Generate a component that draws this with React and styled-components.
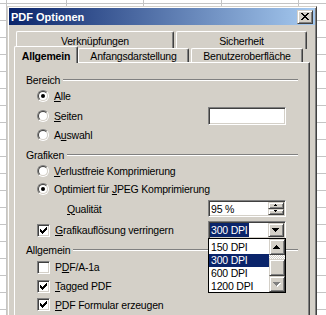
import styled, { createGlobalStyle, css } from "styled-components";

const GlobalStyle = createGlobalStyle`
  html, body {
    margin: 0;
    padding: 0;
  }
  body {
    font-family: "Liberation Sans", Arial, sans-serif;
    font-size: 10.5px;
    letter-spacing: -0.2px;
    color: #000;
  }
`;

const raised = css`
  box-sizing: border-box;
  background: #d4d0c8;
  border: 1px solid;
  border-color: #d4d0c8 #404040 #404040 #d4d0c8;
  box-shadow: inset 1px 1px #fff, inset -1px -1px #808080;
`;

const sunken = css`
  box-sizing: border-box;
  background: #fff;
  border: 1px solid;
  border-color: #808080 #fff #fff #808080;
  box-shadow: inset 1px 1px #404040, inset -1px -1px #d4d0c8;
`;

// spreadsheet behind the dialog
const Sheet = styled.div`
  width: 326px;
  height: 315px;
  overflow: hidden;
  box-sizing: border-box;
  padding: 6px 0 0 7px;
  background-color: #fff;
  background-image: linear-gradient(
      to right,
      transparent 6px,
      #c4c4c4 6px 7px,
      transparent 7px 66px,
      #c4c4c4 66px 67px,
      transparent 67px 143px,
      #c4c4c4 143px 144px,
      transparent 144px 221px,
      #c4c4c4 221px 222px,
      transparent 222px 298px,
      #c4c4c4 298px 299px,
      transparent 299px
    ),
    repeating-linear-gradient(
      to bottom,
      transparent 0 3px,
      #c4c4c4 3px 4px,
      transparent 4px 17px
    );
`;

const Dialog = styled.div`
  width: 310px;
  height: 330px;
  box-sizing: border-box;
  background: #d4d0c8;
  border: 1px solid;
  border-color: #d4d0c8 #404040 #404040 #d4d0c8;
  box-shadow: inset 1px 1px #fff, inset -1px -1px #808080;
  padding: 1px;
`;

const TitleBar = styled.div`
  height: 17px;
  display: flex;
  align-items: center;
  justify-content: space-between;
  padding: 0 2px;
  background: linear-gradient(to right, #0a246a, #a6caf0);
`;

const Title = styled.span`
  color: #fff;
  font-weight: bold;
  font-size: 11px;
  letter-spacing: 0;
`;

const CloseButton = styled.div`
  ${raised};
  width: 16px;
  height: 14px;
  display: flex;
  align-items: center;
  justify-content: center;
  padding-right: 1px;
`;

const Body = styled.div`
  padding: 6px 5px 0;
`;

const TabRow = styled.div`
  display: flex;
  gap: 2px;
  height: ${(p) => p.$h}px;
  padding-left: 2px;
  position: relative;
  z-index: ${(p) => (p.$front ? 2 : 1)};
`;

const Tab = styled.div`
  box-sizing: border-box;
  width: ${(p) => p.$w}px;
  height: ${(p) => p.$h}px;
  background: #d4d0c8;
  border-top: 1px solid #fff;
  border-left: 1px solid #fff;
  border-right: 1px solid #404040;
  box-shadow: inset -1px 0 #808080;
  border-radius: 2px 2px 0 0;
  text-align: center;
  padding-top: ${(p) => p.$pt}px;
  white-space: nowrap;

  ${(p) =>
    p.$active &&
    css`
      font-weight: bold;
      margin: -2px -2px 0;
      height: ${p.$h + 3}px;
      padding-top: ${p.$pt + 2}px;
    `}
`;

const Panel = styled.div`
  box-sizing: border-box;
  height: 300px;
  border: 1px solid;
  border-color: #fff #404040 #404040 #fff;
  box-shadow: inset -1px -1px #808080;
  padding: 10px 11px 0;
`;

const GroupHead = styled.div`
  display: flex;
  align-items: center;
  gap: 3px;
  height: 14px;
  margin-top: ${(p) => p.$mt || 0}px;

  &::after {
    content: "";
    flex: 1;
    border-top: 1px solid #808080;
    border-bottom: 1px solid #fff;
  }
`;

const OptionRow = styled.div`
  display: flex;
  align-items: center;
  height: ${(p) => p.$h}px;
  padding-left: ${(p) => p.$indent ?? 11}px;
  gap: 5px;
`;

const Radio = styled.span`
  position: relative;
  width: 12px;
  height: 12px;
  box-sizing: border-box;
  border-radius: 50%;
  border: 1px solid;
  border-color: #808080 #fff #fff #808080;
  flex: none;

  &::before {
    content: "";
    position: absolute;
    inset: 0;
    border-radius: 50%;
    border: 1px solid;
    border-color: #404040 #d4d0c8 #d4d0c8 #404040;
    background: #fff;
  }

  &::after {
    content: "";
    position: absolute;
    left: 3px;
    top: 3px;
    width: 4px;
    height: 4px;
    border-radius: 50%;
    background: #000;
    display: ${(p) => (p.$checked ? "block" : "none")};
  }
`;

const CheckBox = styled.span`
  ${sunken};
  width: 13px;
  height: 13px;
  flex: none;
  display: flex;
  align-items: center;
  justify-content: center;
`;

const Key = styled.span`
  text-decoration: underline;
`;

const Field = styled.div`
  ${sunken};
  position: relative;
  display: flex;
  align-items: stretch;
  width: 78px;
  height: ${(p) => p.$h}px;
  padding: 1px;
  margin-left: auto;
  margin-right: 12px;
`;

const FieldText = styled.span`
  flex: 1;
  display: flex;
  align-items: center;
  padding-left: 1px;
`;

const Highlight = styled.span`
  align-self: stretch;
  display: flex;
  align-items: center;
  background: #0a246a;
  color: #fff;
  padding: 0 1px;
  margin-right: auto;
`;

const SpinButtons = styled.div`
  display: flex;
  flex-direction: column;
  width: 16px;
`;

const SmallButton = styled.div`
  ${raised};
  flex: ${(p) => (p.$fill ? 1 : "none")};
  width: 16px;
  height: ${(p) => (p.$h ? `${p.$h}px` : "auto")};
  display: flex;
  align-items: center;
  justify-content: center;
`;

const DropList = styled.div`
  position: absolute;
  left: -1px;
  top: 100%;
  width: 78px;
  height: 55px;
  box-sizing: border-box;
  border: 1px solid #000;
  background: #fff;
  padding-top: 2px;
  overflow: hidden;
  z-index: 5;
`;

const ListItem = styled.div`
  width: 60px;
  height: 13px;
  line-height: 13px;
  padding-left: 2px;
  box-sizing: border-box;
  background: ${(p) => (p.$selected ? "#0a246a" : "transparent")};
  color: ${(p) => (p.$selected ? "#fff" : "#000")};
`;

const ScrollBar = styled.div`
  position: absolute;
  top: 0;
  right: 0;
  bottom: 0;
  width: 16px;
  display: flex;
  flex-direction: column;
`;

const Track = styled.div`
  height: 4px;
  background: repeating-conic-gradient(#d4d0c8 0 25%, #fff 0 50%) 0 0 / 2px 2px;
`;

const Arrow = ({ dir = "down", size = "big", disabled }) => {
  const d =
    size === "big"
      ? "M0 0h7v1h-7z M1 1h5v1h-5z M2 2h3v1h-3z M3 3h1v1h-1z"
      : "M0 0h3v1h-3z M1 1h1v1h-1z";
  const w = size === "big" ? 7 : 3;
  const h = size === "big" ? 4 : 2;
  const flip = dir === "up" ? `rotate(180 ${w / 2} ${h / 2})` : undefined;
  return (
    <svg width={w + 1} height={h + 1} shapeRendering="crispEdges">
      {disabled && <path d={d} fill="#fff" transform={`translate(1 1) ${flip || ""}`} />}
      <path d={d} fill={disabled ? "#808080" : "#000"} transform={flip} />
    </svg>
  );
};

const CheckMark = () => (
  <svg width="7" height="7" shapeRendering="crispEdges">
    <path
      d="M6 0h1v1h-1z M5 1h2v1h-2z M0 2h1v1h-1z M4 2h3v1h-3z M0 3h2v1h-2z M3 3h3v1h-3z M0 4h5v1h-5z M1 5h3v1h-3z M2 6h1v1h-1z"
      fill="#000"
    />
  </svg>
);

const CloseGlyph = () => (
  <svg width="8" height="7" shapeRendering="crispEdges">
    <path
      d="M0 0h2v1h-2z M6 0h2v1h-2z M1 1h2v1h-2z M5 1h2v1h-2z M2 2h4v1h-4z M3 3h2v1h-2z M2 4h4v1h-4z M1 5h2v1h-2z M5 5h2v1h-2z M0 6h2v1h-2z M6 6h2v1h-2z"
      fill="#000"
    />
  </svg>
);

const Check = ({ checked }) => <CheckBox>{checked && <CheckMark />}</CheckBox>;

export default function App() {
  return (
    <>
      <GlobalStyle />
      <Sheet>
        <Dialog>
          <TitleBar>
            <Title>PDF Optionen</Title>
            <CloseButton>
              <CloseGlyph />
            </CloseButton>
          </TitleBar>
          <Body>
            <TabRow $h={17}>
              <Tab $w={158} $h={18} $pt={3}>Verknüpfungen</Tab>
              <Tab $w={131} $h={18} $pt={3}>Sicherheit</Tab>
            </TabRow>
            <TabRow $h={14} $front>
              <Tab $w={64} $h={14} $pt={1} $active>Allgemein</Tab>
              <Tab $w={111} $h={14} $pt={1}>Anfangsdarstellung</Tab>
              <Tab $w={112} $h={14} $pt={1}>Benutzeroberfläche</Tab>
            </TabRow>
            <Panel>
              <GroupHead>Bereich</GroupHead>
              <OptionRow $h={17}>
                <Radio $checked />
                <span><Key>A</Key>lle</span>
              </OptionRow>
              <OptionRow $h={23}>
                <Radio />
                <span><Key>S</Key>eiten</span>
                <Field $h={18} />
              </OptionRow>
              <OptionRow $h={16}>
                <Radio />
                <span>A<Key>u</Key>swahl</span>
              </OptionRow>

              <GroupHead $mt={5}>Grafiken</GroupHead>
              <OptionRow $h={18}>
                <Radio />
                <span><Key>V</Key>erlustfreie Komprimierung</span>
              </OptionRow>
              <OptionRow $h={18}>
                <Radio $checked />
                <span>Optimiert für <Key>J</Key>PEG Komprimierung</span>
              </OptionRow>
              <OptionRow $h={21} $indent={41}>
                <span><Key>Q</Key>ualität</span>
                <Field $h={17}>
                  <FieldText>95 %</FieldText>
                  <SpinButtons>
                    <SmallButton $fill>
                      <Arrow dir="up" size="small" />
                    </SmallButton>
                    <SmallButton $fill>
                      <Arrow size="small" />
                    </SmallButton>
                  </SpinButtons>
                </Field>
              </OptionRow>
              <OptionRow $h={22}>
                <Check checked />
                <span><Key>G</Key>rafikauflösung verringern</span>
                <Field $h={18}>
                  <Highlight>300 DPI</Highlight>
                  <SmallButton>
                    <Arrow />
                  </SmallButton>
                  <DropList>
                    <ListItem>150 DPI</ListItem>
                    <ListItem $selected>300 DPI</ListItem>
                    <ListItem>600 DPI</ListItem>
                    <ListItem>1200 DPI</ListItem>
                    <ScrollBar>
                      <SmallButton $h={16}>
                        <Arrow dir="up" />
                      </SmallButton>
                      <Track />
                      <SmallButton $h={17} />
                      <SmallButton $h={16}>
                        <Arrow disabled />
                      </SmallButton>
                    </ScrollBar>
                  </DropList>
                </Field>
              </OptionRow>

              <GroupHead $mt={2}>Allgemein</GroupHead>
              <OptionRow $h={20}>
                <Check />
                <span>P<Key>D</Key>F/A-1a</span>
              </OptionRow>
              <OptionRow $h={18}>
                <Check checked />
                <span><Key>T</Key>agged PDF</span>
              </OptionRow>
              <OptionRow $h={19}>
                <Check checked />
                <span><Key>P</Key>DF Formular erzeugen</span>
              </OptionRow>
            </Panel>
          </Body>
        </Dialog>
      </Sheet>
    </>
  );
}
